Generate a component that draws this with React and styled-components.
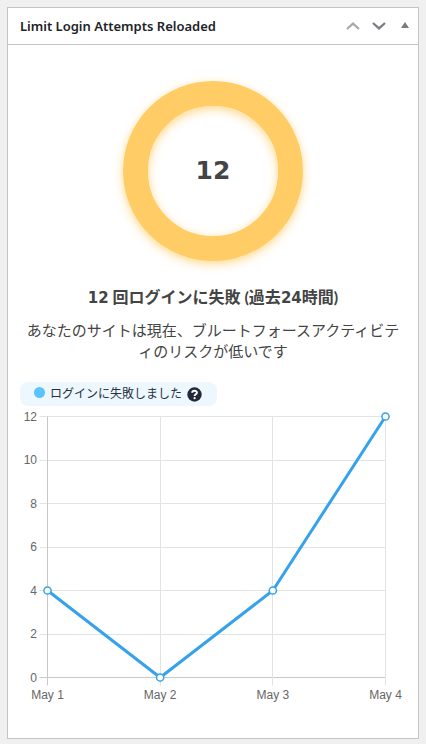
import React from 'react';
import styled, { createGlobalStyle } from 'styled-components';

const GlobalStyle = createGlobalStyle`
  body {
    margin: 0;
    background-color: #f0f0f1;
    font-family: "Noto Sans", "Noto Sans CJK JP", sans-serif;
    color: #3c434a;
  }
  * {
    box-sizing: border-box;
  }
`;

const Page = styled.main`
  padding: 7px;
`;

const Widget = styled.section`
  background-color: #fff;
  border: 1px solid #c3c4c7;
`;

const WidgetHeader = styled.header`
  display: flex;
  align-items: center;
  justify-content: space-between;
  height: 37px;
  padding-left: 12px;
  border-bottom: 1px solid #c3c4c7;
`;

const Title = styled.h2`
  margin: 0;
  font-size: 13px;
  font-weight: 600;
  line-height: 18px;
  color: #1d2327;
`;

const Actions = styled.div`
  display: flex;
`;

const ActionButton = styled.button`
  display: flex;
  align-items: center;
  justify-content: center;
  width: 26px;
  height: 36px;
  padding: 0;
  border: none;
  background: none;
  color: ${(props) => (props.$muted ? '#a7aaad' : '#787c82')};
  cursor: pointer;
`;

const WidgetBody = styled.div`
  display: flex;
  flex-direction: column;
  padding: 36px 12px 32px;
`;

const Ring = styled.div`
  display: flex;
  align-items: center;
  justify-content: center;
  align-self: center;
  width: 180px;
  height: 180px;
  border: 25px solid #ffcc66;
  border-radius: 50%;
  box-shadow: 0 3px 10px #ffcc66c0, inset 0 3px 10px #ffcc66c0;
`;

const RingValue = styled.span`
  font-family: "DejaVu Sans", sans-serif;
  font-size: 25px;
  font-weight: 700;
  line-height: 32px;
  color: #444;
`;

const Heading = styled.h3`
  margin: 24px 0 0;
  font-family: Lato, "Noto Sans CJK JP", sans-serif;
  font-size: 16px;
  font-weight: 700;
  line-height: 24px;
  text-align: center;
  color: #444;
`;

const Digits = styled.span`
  font-family: "DejaVu Sans", sans-serif;
  font-size: 15px;
  line-height: 16px;
`;

const Description = styled.p`
  margin: 10px 0 0;
  font-family: "Noto Sans CJK JP", sans-serif;
  font-size: 15px;
  line-height: 21px;
  text-align: center;
  color: #444;
`;

const Legend = styled.div`
  display: flex;
  align-items: center;
  align-self: flex-start;
  height: 24px;
  margin-top: 21px;
  padding: 0 15px 3px 14px;
  border-radius: 8px;
  background-color: #ecf8fd;
  font-family: "Noto Sans CJK JP", sans-serif;
  font-size: 12px;
  line-height: 20px;
  color: #2a2f40;
`;

const Dot = styled.span`
  width: 11px;
  height: 11px;
  margin-right: 5px;
  border-radius: 50%;
  background-color: #58c3ff;
`;

const HelpIcon = styled.svg`
  margin: 3px 0 0 5px;
`;

const Chart = styled.svg`
  display: block;
  width: 100%;
  height: auto;

  text {
    font-family: "Liberation Sans", Arial, sans-serif;
    font-size: 12px;
    fill: #666;
  }
`;

const points = [
  { label: 'May 1', value: 4 },
  { label: 'May 2', value: 0 },
  { label: 'May 3', value: 4 },
  { label: 'May 4', value: 12 },
];
const ticks = [0, 2, 4, 6, 8, 10, 12];

const LEFT = 27.5;
const RIGHT = 365.5;
const TOP = 10.5;
const BOTTOM = 271.5;

const getX = (index) => LEFT + (index * (RIGHT - LEFT)) / (points.length - 1);
const getY = (value) => BOTTOM - (value * (BOTTOM - TOP)) / 12;
// keeps the 1px grid lines sharp
const snap = (n) => Math.floor(n) + 0.5;

const FailedLoginsChart = () => (
  <Chart viewBox="0 0 386 300" role="img" aria-label="ログインに失敗しました">
    {ticks.map((tick) => (
      <g key={tick}>
        <line
          x1={LEFT - 8}
          x2={RIGHT}
          y1={snap(getY(tick))}
          y2={snap(getY(tick))}
          stroke={tick === 0 ? '#c8c8c8' : '#e3e3e3'}
        />
        <text x="17" y={getY(tick) + 4} textAnchor="end">{tick}</text>
      </g>
    ))}
    {points.map((point, index) => (
      <g key={point.label}>
        <line
          x1={snap(getX(index))}
          x2={snap(getX(index))}
          y1={TOP}
          y2={BOTTOM + 8}
          stroke={index === 0 ? '#c8c8c8' : '#e3e3e3'}
        />
        <text x={getX(index)} y="293" textAnchor="middle">{point.label}</text>
      </g>
    ))}
    <polyline
      points={points.map((point, index) => `${getX(index)},${getY(point.value)}`).join(' ')}
      fill="none"
      stroke="#36a2eb"
      strokeWidth="3"
    />
    {points.map((point, index) => (
      <circle
        key={point.label}
        cx={getX(index)}
        cy={getY(point.value)}
        r="3.6"
        fill="#fff"
        stroke="#36a2eb"
        strokeWidth="1.5"
      />
    ))}
  </Chart>
);

const App = () => {
  return (
    <Page>
      <GlobalStyle />
      <Widget>
        <WidgetHeader>
          <Title>Limit Login Attempts Reloaded</Title>
          <Actions>
            <ActionButton type="button" aria-label="Move up" $muted>
              <svg width="14" height="8" viewBox="0 0 14 8" fill="none" stroke="currentColor" strokeWidth="2.2">
                <path d="M1 7 L7 1.6 L13 7" />
              </svg>
            </ActionButton>
            <ActionButton type="button" aria-label="Move down">
              <svg width="14" height="8" viewBox="0 0 14 8" fill="none" stroke="currentColor" strokeWidth="2.2">
                <path d="M1 1 L7 6.4 L13 1" />
              </svg>
            </ActionButton>
            <ActionButton type="button" aria-label="Toggle panel">
              <svg width="8" height="8" viewBox="0 0 8 8" fill="currentColor">
                <path d="M4 0 L8 6 H0 Z" />
              </svg>
            </ActionButton>
          </Actions>
        </WidgetHeader>
        <WidgetBody>
          <Ring>
            <RingValue>12</RingValue>
          </Ring>
          <Heading>
            <Digits>12</Digits> 回ログインに失敗 (過去<Digits>24</Digits>時間)
          </Heading>
          <Description>
            あなたのサイトは現在、ブルートフォースアクティビティのリスクが低いです
          </Description>
          <Legend>
            <Dot />
            ログインに失敗しました
            <HelpIcon width="15" height="15" viewBox="0 0 15 15" aria-hidden="true">
              <circle cx="7.5" cy="7.5" r="7.2" fill="#24293a" />
              <path
                d="M5.2 5.8 C5.2 3 9.9 3 9.9 5.7 C9.9 7.3 7.6 7.2 7.6 9"
                fill="none"
                stroke="#fff"
                strokeWidth="2"
              />
              <circle cx="7.6" cy="11.2" r="1.1" fill="#fff" />
            </HelpIcon>
          </Legend>
          <FailedLoginsChart />
        </WidgetBody>
      </Widget>
    </Page>
  );
};

export default App;
